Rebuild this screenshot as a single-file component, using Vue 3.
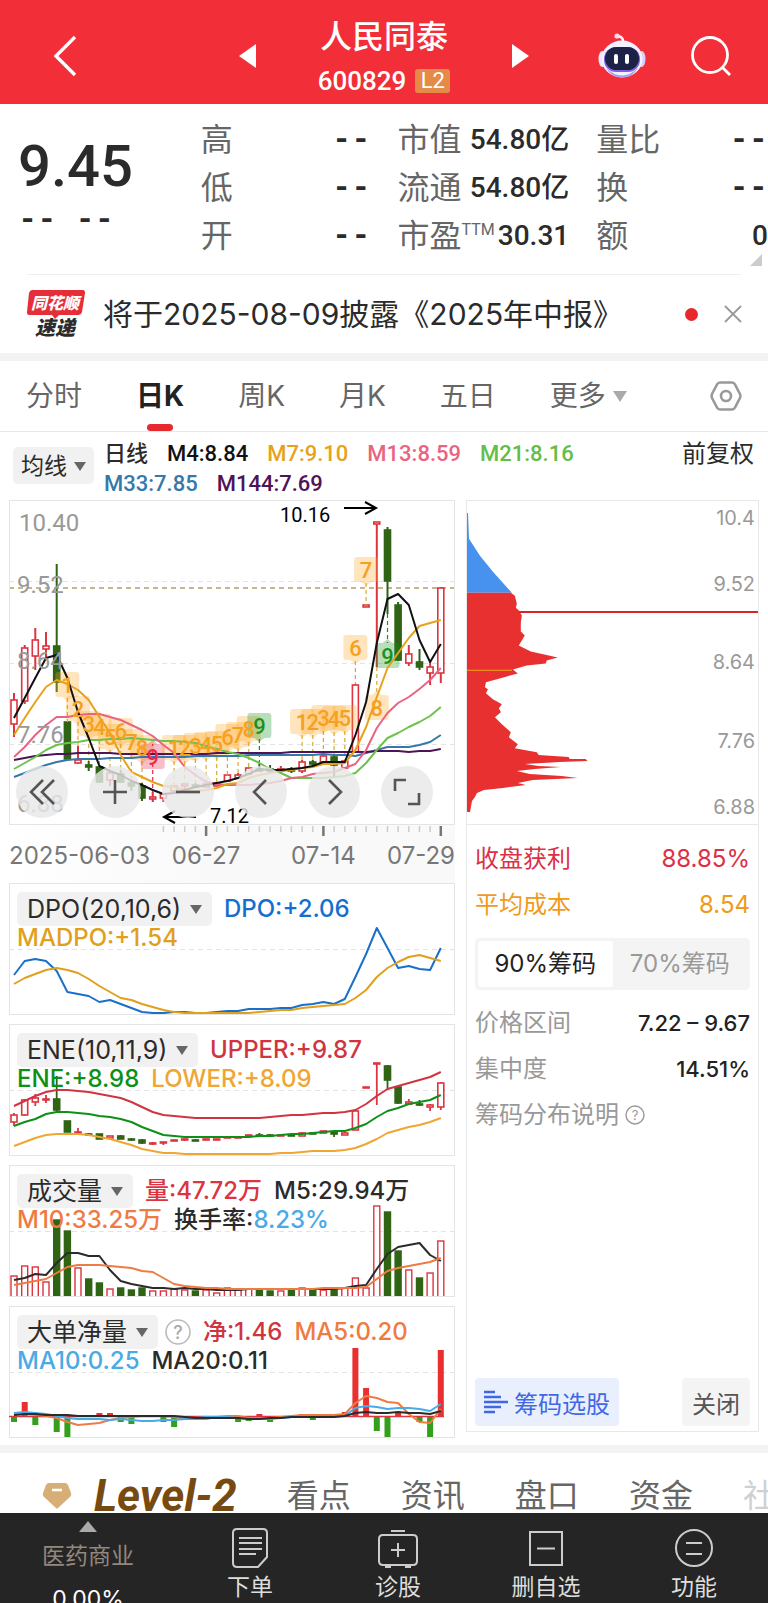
<template>
  <div class="page">
    <header class="header">
      <button class="icon-btn back" aria-label="返回">
        <svg width="26" height="44" viewBox="0 0 26 44">
          <path d="M23 3 L4 22 L23 41" fill="none" stroke="#fff" stroke-width="3.4" />
        </svg>
      </button>
      <div class="stock">
        <button class="icon-btn" aria-label="上一只">
          <svg width="18" height="24" viewBox="0 0 18 24"><path d="M17 0 V24 L0 12Z" fill="#fff" /></svg>
        </button>
        <div class="stock-title">
          <h1>人民同泰</h1>
          <p>600829 <span class="l2">L2</span></p>
        </div>
        <button class="icon-btn" aria-label="下一只">
          <svg width="18" height="24" viewBox="0 0 18 24"><path d="M1 0 V24 L18 12Z" fill="#fff" /></svg>
        </button>
      </div>
      <div class="header-right">
        <button class="icon-btn" aria-label="智能助手">
          <svg width="48" height="46" viewBox="0 0 48 46">
            <path d="M25 10 Q26 4 20 3" fill="none" stroke="#fff" stroke-width="2.4" />
            <circle cx="19" cy="3" r="2.6" fill="#f6dcf0" />
            <ellipse cx="4.500" cy="26" rx="4" ry="8" fill="#e9e4ff" />
            <ellipse cx="43.500" cy="26" rx="4" ry="8" fill="#d9d2fb" />
            <ellipse cx="24" cy="26" rx="20.500" ry="18.500" fill="#f3f0ff" />
            <path d="M8 35 Q24 50 40 35 Q34 45 24 44.500 Q14 45 8 35" fill="#a9a0ee" />
            <rect x="6" y="14" width="36" height="25" rx="12" fill="#7c62dc" />
            <rect x="7" y="14" width="34" height="23" rx="11.500" fill="#1c2145" />
            <rect x="16" y="21" width="4" height="10" rx="2" fill="#fff" />
            <rect x="27" y="21" width="4" height="10" rx="2" fill="#fff" />
          </svg>
        </button>
        <button class="icon-btn" aria-label="搜索">
          <svg width="42" height="42" viewBox="0 0 42 42">
            <circle cx="20" cy="20" r="17.500" fill="none" stroke="#fff" stroke-width="2.800" />
            <path d="M32 32 L40 40" stroke="#fff" stroke-width="2.800" />
          </svg>
        </button>
      </div>
    </header>

    <section class="quote">
      <div class="price">
        <strong>9.45</strong>
        <span class="dash">-- --</span>
      </div>
      <dl v-for="(col, c) in quote" :key="c">
        <div v-for="q in col" :key="q.label">
          <dt>{{ q.label }}<sup v-if="q.sup">{{ q.sup }}</sup></dt>
          <dd :class="{ dash: q.value === '--' }">{{ q.value }}</dd>
        </div>
      </dl>
      <i class="corner"></i>
    </section>

    <section class="news">
      <svg class="news-logo" width="58" height="48" viewBox="0 0 58 48">
        <path d="M5 0 H56 Q58 0 58 3 L55 22 Q54 25 51 25 H32 L28 29 L25 25 H2 Q0 25 0 22 L2 3 Q3 0 5 0Z" fill="#e62e38" />
        <text x="28" y="19" class="logo-text" fill="#fff" font-size="16">同花顺</text>
        <text x="28" y="45" class="logo-text" fill="#2b2b2b" font-size="20">速递</text>
      </svg>
      <a href="#" class="news-text">将于2025-08-09披露《2025年中报》</a>
      <i class="dot"></i>
      <button class="icon-btn" aria-label="关闭公告">
        <svg width="18" height="18" viewBox="0 0 18 18">
          <path d="M1 1 L17 17 M17 1 L1 17" stroke="#999" stroke-width="1.800" />
        </svg>
      </button>
    </section>

    <nav class="tabs">
      <button
        v-for="t in tabs"
        :key="t"
        :class="{ active: t === tab }"
        @click="tab = t"
      >
        {{ t }}<i v-if="t === '更多'" class="caret light"></i>
      </button>
      <button class="setting" aria-label="设置">
        <svg width="32" height="32" viewBox="0 0 32 32" fill="none" stroke="#999" stroke-width="2.600">
          <path d="M10 2.500 H22 Q24 2.500 25 4.500 L30 14 Q31 16 30 18 L25 27.500 Q24 29.500 22 29.500 H10 Q8 29.500 7 27.500 L2 18 Q1 16 2 14 L7 4.500 Q8 2.500 10 2.500Z" />
          <circle cx="16" cy="16" r="5" />
        </svg>
      </button>
    </nav>

    <section class="ma">
      <span class="pick small">
        <select aria-label="主图指标"><option>均线</option></select>
        <i class="caret"></i>
      </span>
      <div class="ma-list">
        <b>日线</b>
        <span v-for="m in maList" :key="m.text" :style="{ color: m.color }">{{ m.text }}</span>
      </div>
      <button class="adjust">前复权</button>
    </section>

    <main class="board">
      <div class="charts">
        <div class="kline">
          <svg viewBox="0 0 446 325" class="chart">
            <g stroke="#e4e4e4" stroke-dasharray="5 4">
              <path d="M0 81.500 H446 M0 163.500 H446 M0 244.500 H446" />
            </g>
            <path d="M0 88 H446" stroke="#b59f68" stroke-width="1.500" stroke-dasharray="5 4" />
            <g>
              <template v-for="(k, i) in candles" :key="i">
                <path :d="wick(k, i)" :stroke="k[4] ? red : green" stroke-width="2" />
                <rect
                  :x="cx(i) - 3"
                  :y="k[1]"
                  width="6"
                  :height="Math.max(k[2] - k[1], 2)"
                  :fill="k[4] ? '#fff' : green"
                  :stroke="k[4] ? red : green"
                  stroke-width="1.600"
                />
              </template>
            </g>
            <g v-for="b in marks" :key="'m' + b.i">
              <path :d="leader(b)" :stroke="b.color || '#d8a936'" stroke-width="1.200" stroke-dasharray="4 3" />
              <path :d="bubble(b)" :fill="b.color || '#ffa726'" opacity="0.3" />
            </g>
            <polyline
              v-for="l in maLines"
              :key="l.color"
              :points="points(l.data)"
              :stroke="l.color"
              class="line"
            />
            <g class="axis">
              <text x="10" y="31">10.40</text>
              <text x="8" y="93">9.52</text>
              <text x="8" y="169">8.64</text>
              <text x="8" y="243">7.76</text>
              <text x="8" y="312">6.88</text>
            </g>
            <text
              v-for="b in marks"
              :key="'t' + b.i"
              :x="cx(b.i)"
              :y="b.y + 8"
              :fill="b.color || '#f5a01f'"
              class="mark"
            >{{ b.n }}</text>
            <g class="note">
              <text x="271" y="22">10.16</text>
              <text x="201" y="323">7.12</text>
              <path d="M335 8 H367 M356 2 L367 8 L356 14" />
              <path d="M187 317 H155 M166 311 L155 317 L166 323" />
            </g>
          </svg>
          <div class="tools">
            <button v-for="t in tools" :key="t.name" :aria-label="t.name">
              <svg width="30" height="30" viewBox="0 0 30 30"><path :d="t.d" /></svg>
            </button>
          </div>
        </div>
        <div class="time">
          <svg viewBox="0 0 446 58" class="chart">
            <path
              v-for="i in 27"
              :key="i"
              :d="tick(i + 13)"
              :stroke="bigTicks.includes(i + 13) ? '#777' : '#ccc'"
              :stroke-width="bigTicks.includes(i + 13) ? 2.5 : 1.5"
            />
            <text x="0" y="39">2025-06-03</text>
            <text :x="cx(18)" y="39" text-anchor="middle">06-27</text>
            <text :x="cx(29)" y="39" text-anchor="middle">07-14</text>
            <text x="446" y="39" text-anchor="end">07-29</text>
          </svg>
        </div>

        <div v-for="p in panels" :key="p.name" class="panel">
          <svg viewBox="0 0 446 130" class="chart">
            <path d="M0 65.500 H446" stroke="#e4e4e4" stroke-dasharray="5 4" />
            <template v-if="p.type === 'ene'">
              <template v-for="(k, i) in eneCandles" :key="i">
                <path :d="wick(k, i)" :stroke="k[4] ? red : green" stroke-width="1.800" />
                <rect
                  :x="cx(i) - 3"
                  :y="k[1]"
                  width="6"
                  :height="Math.max(k[2] - k[1], 1)"
                  :fill="k[4] ? '#fff' : green"
                  :stroke="k[4] ? red : green"
                  stroke-width="1.600"
                />
              </template>
            </template>
            <template v-if="p.type === 'vol'">
              <rect
                v-for="(v, i) in volume"
                :key="i"
                :x="cx(i) - 3"
                :y="Math.abs(v)"
                width="6"
                :height="131 - Math.abs(v)"
                :fill="v > 0 ? '#fff' : green"
                :stroke="v > 0 ? red : green"
                stroke-width="1.400"
              />
            </template>
            <template v-if="p.type === 'net'">
              <path d="M0 109.500 H435" :stroke="red" stroke-width="1.500" />
              <rect
                v-for="(v, i) in net"
                :key="i"
                :x="cx(i) - 3"
                :y="v > 0 ? 109 - v : 110"
                width="6"
                :height="Math.abs(v)"
                :fill="v > 0 ? '#e92f30' : '#33a01c'"
              />
            </template>
            <polyline
              v-for="l in p.lines"
              :key="l.color"
              :points="points(l.data)"
              :stroke="l.color"
              class="line"
            />
          </svg>
          <div class="legend">
            <div v-for="(row, r) in p.rows" :key="r" class="legend-row">
              <span v-if="r === 0" class="pick">
                <select :aria-label="p.name"><option>{{ p.name }}</option></select>
                <i class="caret"></i>
              </span>
              <button v-if="r === 0 && p.help" class="icon-btn" aria-label="指标说明">
                <svg width="26" height="26" viewBox="0 0 26 26">
                  <circle cx="13" cy="13" r="12" fill="none" stroke="#bbb" stroke-width="1.600" />
                  <text x="13" y="20" text-anchor="middle" font-size="18" fill="#aaa">?</text>
                </svg>
              </button>
              <span v-for="s in row" :key="s.text" :style="{ color: s.color }">
                {{ s.text }}<em v-if="s.value" :style="{ color: s.valueColor }">{{ s.value }}</em>
              </span>
            </div>
          </div>
        </div>
      </div>

      <aside class="chips">
        <svg viewBox="0 0 292 324" class="chart">
          <path d="M0 12 L1 12 L2 38 L13 55 L26 71 L45 92 H0Z" fill="#4791ef" />
          <path :d="chipShape" fill="#e93030" />
          <path d="M52 111.500 H292" stroke="#d9242b" stroke-width="2" />
          <path d="M0 170 H45" stroke="#f08a1c" stroke-width="1.300" />
          <g class="chip-axis">
            <text x="289" y="24">10.4</text>
            <text x="289" y="90">9.52</text>
            <text x="289" y="169">8.64</text>
            <text x="289" y="248">7.76</text>
            <text x="289" y="314">6.88</text>
          </g>
        </svg>
        <div class="chip-info">
          <p class="profit"><span>收盘获利</span><span>88.85%</span></p>
          <p class="cost"><span>平均成本</span><span>8.54</span></p>
          <div class="segment">
            <button
              v-for="r in ratios"
              :key="r"
              :class="{ on: r === ratio }"
              @click="ratio = r"
            >{{ r }}筹码</button>
          </div>
          <p><span>价格区间</span><b>7.22 – 9.67</b></p>
          <p><span>集中度</span><b>14.51%</b></p>
          <p class="explain">
            <a href="#">筹码分布说明
              <svg width="20" height="20" viewBox="0 0 20 20">
                <circle cx="10" cy="10" r="9" fill="none" stroke="#999" stroke-width="1.400" />
                <text x="10" y="15" text-anchor="middle" font-size="13" fill="#999">?</text>
              </svg>
            </a>
          </p>
          <div class="chip-actions">
            <button class="select-btn">
              <svg width="24" height="24" viewBox="0 0 24 24" stroke="#4068e4" stroke-width="2.600">
                <path d="M0 2 H11 M0 7 H17 M0 12 H24 M0 17 H17 M0 22 H11" />
              </svg>
              筹码选股
            </button>
            <button class="close-btn">关闭</button>
          </div>
        </div>
      </aside>
    </main>

    <nav class="level">
      <svg width="30" height="26" viewBox="0 0 30 26">
        <path d="M7 0 H23 Q25 0 26 2 L29 10 Q30 12 28 14 L16 25 Q15 26 14 25 L2 14 Q0 12 1 10 L4 2 Q5 0 7 0Z" fill="#d6ae76" />
        <path d="M10 7 H20" stroke="#fff" stroke-width="2.600" />
      </svg>
      <a href="#" class="level-name">Level-2</a>
      <a v-for="l in levelTabs" :key="l" href="#">{{ l }}</a>
      <a href="#" class="faded">社</a>
    </nav>

    <footer class="bottom">
      <button class="sector">
        <svg width="18" height="11" viewBox="0 0 18 11"><path d="M9 0 L18 11 H0Z" fill="#aaa" /></svg>
        <span>医药商业</span>
        <b>0.00%</b>
      </button>
      <button v-for="a in actions" :key="a.name">
        <svg width="42" height="40" viewBox="0 0 42 40"><path :d="a.d" /></svg>
        <span>{{ a.name }}</span>
      </button>
    </footer>
  </div>
</template>

<script setup>
import { ref } from "vue";

const red = "#dc3440";
const green = "#2f6414";

const tab = ref("日K");
const tabs = ["分时", "日K", "周K", "月K", "五日", "更多"];
const ratio = ref("90%");
const ratios = ["90%", "70%"];
const levelTabs = ["看点", "资讯", "盘口", "资金"];

const quote = [
  [
    { label: "高", value: "--" },
    { label: "低", value: "--" },
    { label: "开", value: "--" },
  ],
  [
    { label: "市值", value: "54.80亿" },
    { label: "流通", value: "54.80亿" },
    { label: "市盈", sup: "TTM", value: "30.31" },
  ],
  [
    { label: "量比", value: "--" },
    { label: "换", value: "--" },
    { label: "额", value: "0" },
  ],
];

const maList = [
  { text: "M4:8.84", color: "#111" },
  { text: "M7:9.10", color: "#e6a21a" },
  { text: "M13:8.59", color: "#ea6482" },
  { text: "M21:8.16", color: "#66bd45" },
  { text: "M33:7.85", color: "#3579ab" },
  { text: "M144:7.69", color: "#4f1458" },
];

// [high, body top, body bottom, low, up]
const candles = [
  [193, 200, 224, 237, 1], [145, 148, 201, 204, 1], [128, 140, 156, 170, 1],
  [132, 146, 149, 158, 1], [64, 146, 182, 192, 0], [222, 222, 259, 259, 0],
  [246, 260, 263, 264, 1], [261, 265, 267, 271, 0], [267, 267, 282, 283, 0],
  [272, 273, 280, 286, 1], [270, 274, 282, 283, 0], [280, 283, 286, 291, 0],
  [283, 286, 298, 301, 0], [292, 297, 299, 302, 1], [293, 294, 298, 302, 1],
  [286, 286, 291, 291, 1], [284, 284, 286, 290, 1], [283, 285, 287, 288, 0],
  [284, 284, 287, 287, 1], [283, 283, 286, 286, 1], [275, 275, 281, 281, 1],
  [273, 275, 278, 279, 1], [268, 268, 274, 275, 1], [263, 269, 271, 272, 0],
  [265, 269, 270, 273, 0], [266, 269, 271, 273, 1], [267, 269, 270, 273, 0],
  [260, 262, 271, 273, 1], [260, 262, 264, 266, 0], [254, 256, 262, 263, 1],
  [255, 257, 265, 276, 0], [260, 261, 268, 269, 1], [184, 185, 252, 253, 1],
  [105, 105, 107, 107, 1], [22, 22, 23, 167, 1], [27, 30, 81, 114, 0],
  [102, 105, 160, 161, 0], [145, 154, 163, 166, 1], [149, 162, 167, 170, 0],
  [161, 167, 173, 185, 1], [87, 88, 173, 183, 1],
];

const eneCandles = candles.map((k) => [
  ...k.slice(0, 4).map((y) => Math.round(y * 0.29 + 32)),
  k[4],
]);

const maLines = [
  {
    color: "#3579ab",
    data: [277, 273, 269, 265, 262, 260, 259, 259, 259, 258, 258, 258, 257, 257, 257, 257, 257, 256, 256, 256, 256, 256, 255, 255, 255, 255, 255, 255, 255, 254, 255, 255, 256, 253, 250, 247, 247, 247, 245, 242, 235],
  },
  {
    color: "#4f1458",
    data: [260, 258, 256, 255, 254, 254, 253, 253, 253, 253, 254, 254, 254, 254, 254, 254, 254, 254, 254, 253, 253, 253, 253, 253, 253, 253, 252, 252, 252, 252, 252, 252, 252, 252, 251, 251, 251, 252, 251, 251, 249],
  },
  {
    color: "#6dc24d",
    data: [269, 263, 257, 250, 245, 243, 242, 240, 240, 239, 239, 238, 239, 240, 241, 241, 242, 243, 246, 249, 252, 254, 258, 263, 269, 273, 278, 278, 278, 278, 277, 276, 273, 263, 250, 238, 233, 227, 222, 216, 207],
  },
  {
    color: "#ea6482",
    data: [257, 247, 235, 225, 217, 217, 215, 214, 214, 217, 220, 225, 230, 236, 245, 253, 267, 275, 282, 284, 285, 285, 285, 284, 283, 281, 278, 277, 274, 273, 272, 268, 264, 250, 228, 213, 203, 197, 189, 180, 168],
  },
  {
    color: "#e6a21a",
    data: [235, 218, 202, 187, 180, 184, 190, 200, 217, 233, 255, 272, 277, 282, 286, 287, 290, 291, 290, 288, 284, 283, 278, 275, 273, 271, 270, 268, 267, 264, 264, 263, 250, 227, 197, 168, 153, 138, 126, 123, 120],
  },
  {
    color: "#111",
    data: [218, 198, 178, 158, 155, 178, 212, 238, 266, 271, 275, 281, 285, 290, 294, 293, 290, 287, 285, 283, 281, 278, 274, 269, 270, 270, 269, 268, 266, 262, 262, 262, 235, 202, 143, 99, 94, 105, 140, 162, 144],
  },
];

const seq = (from, ys) => ys.map((y, n) => ({ i: from + n, n: n + 1, y }));
const marks = [
  ...seq(5, [185, 209, 224, 227, 237, 231, 242, 248]),
  { i: 13, n: 9, y: 257, color: "#e8284a", up: true },
  ...seq(15, [248, 248, 246, 245, 244, 237, 235, 229]),
  { i: 23, n: 9, y: 226, color: "#18921e" },
  ...seq(27, [222, 222, 218, 219, 218, 148, 70]),
  { i: 34, n: 8, y: 208, up: true },
  { i: 35, n: 9, y: 156, color: "#18921e", up: true },
];

// negative volume = falling day
const volume = [110, 100, 101, 116, -54, -65, 102, -113, -117, 123, -122, -124, -122, 125, 125, 123, 124, -125, 124, 127, 122, 124, 123, -124, -125, 125, -124, 122, -124, 124, -124, 122, 112, 122, 40, -46, -85, 104, -112, 107, 75];
const net = [-5, 14, -8, 0, -15, -22, 0, 0, 3, 3, -5, -7, 0, 0, -5, -10, 0, 0, 0, 0, 0, -5, -4, 2, -5, 0, 0, 2, -3, 0, 0, 4, 68, 28, -14, -20, 4, 0, -5, -22, 66];

const panels = [
  {
    name: "DPO(20,10,6)",
    type: "dpo",
    rows: [
      [{ text: "DPO:+2.06", color: "#156fd0" }],
      [{ text: "MADPO:+1.54", color: "#e0a01c" }],
    ],
    lines: [
      {
        color: "#1a70c8",
        data: [91, 77, 75, 77, 87, 108, 110, 112, 118, 116, 120, 124, 128, 129, 129, 128, 128, 129, 129, 128, 127, 127, 125, 125, 125, 124, 124, 121, 120, 118, 120, 115, 93, 70, 44, 64, 84, 82, 85, 86, 64],
      },
      {
        color: "#e0a01c",
        data: [100, 94, 90, 86, 84, 86, 89, 95, 102, 108, 114, 116, 120, 123, 126, 128, 129, 129, 129, 129, 129, 129, 129, 128, 127, 126, 126, 124, 123, 122, 121, 120, 114, 106, 93, 84, 78, 73, 71, 74, 77],
      },
    ],
  },
  {
    name: "ENE(10,11,9)",
    type: "ene",
    rows: [
      [{ text: "UPPER:+9.87", color: "#d0353f" }],
      [
        { text: "ENE:+8.98", color: "#0d9018" },
        { text: "LOWER:+8.09", color: "#efa632" },
      ],
    ],
    lines: [
      {
        color: "#d0353f",
        data: [81, 76, 71, 67, 65, 65, 66, 67, 69, 71, 73, 77, 82, 87, 90, 91, 92, 93, 93, 93, 93, 93, 93, 93, 92, 91, 90, 90, 89, 88, 88, 87, 85, 79, 71, 64, 61, 58, 55, 52, 47],
      },
      {
        color: "#0d9018",
        data: [101, 97, 94, 89, 87, 87, 88, 89, 91, 92, 94, 97, 102, 106, 110, 111, 112, 112, 112, 112, 112, 112, 112, 111, 111, 110, 109, 109, 108, 107, 106, 106, 103, 99, 92, 86, 83, 79, 77, 75, 70],
      },
      {
        color: "#efa632",
        data: [121, 117, 113, 110, 109, 109, 109, 110, 112, 114, 117, 120, 124, 126, 128, 128, 129, 129, 129, 129, 129, 129, 129, 129, 129, 128, 128, 127, 126, 126, 126, 125, 123, 119, 114, 108, 105, 102, 100, 97, 93],
      },
    ],
  },
  {
    name: "成交量",
    type: "vol",
    rows: [
      [
        { text: "量:47.72万", color: "#dc3440" },
        { text: "M5:29.94万", color: "#2b2b2b" },
      ],
      [
        { text: "M10:33.25万", color: "#f07b42" },
        { text: "换手率:", color: "#2b2b2b", value: "8.23%", valueColor: "#4aaae6" },
      ],
    ],
    lines: [
      {
        color: "#2b2b2b",
        data: [114, 112, 108, 109, 97, 87, 87, 90, 90, 104, 115, 118, 120, 122, 122, 123, 122, 123, 123, 124, 124, 124, 123, 123, 123, 123, 123, 123, 123, 123, 123, 122, 120, 119, 103, 88, 81, 79, 77, 89, 95],
      },
      {
        color: "#f07b42",
        data: [119, 117, 115, 113, 107, 101, 99, 99, 99, 100, 101, 102, 105, 106, 112, 118, 120, 121, 122, 122, 123, 123, 123, 123, 123, 123, 123, 123, 123, 122, 122, 122, 122, 121, 113, 105, 102, 100, 98, 96, 92],
      },
    ],
  },
  {
    name: "大单净量",
    type: "net",
    help: true,
    rows: [
      [
        { text: "净:1.46", color: "#d0353f" },
        { text: "MA5:0.20", color: "#f07b42" },
      ],
      [
        { text: "MA10:0.25", color: "#4aaae6" },
        { text: "MA20:0.11", color: "#2b2b2b" },
      ],
    ],
    lines: [
      {
        color: "#f07b42",
        data: [108, 107, 108, 109, 111, 115, 118, 117, 116, 113, 111, 110, 109, 109, 109, 110, 112, 112, 112, 110, 109, 109, 111, 111, 111, 110, 109, 108, 108, 108, 108, 107, 96, 89, 91, 95, 96, 107, 115, 116, 102],
      },
      {
        color: "#4aaae6",
        data: [106, 105, 106, 107, 109, 111, 112, 112, 112, 113, 112, 113, 114, 114, 113, 113, 112, 111, 110, 110, 110, 111, 112, 112, 112, 111, 110, 110, 110, 109, 109, 109, 101, 99, 100, 102, 101, 101, 102, 104, 97],
      },
      {
        color: "#2b2b2b",
        data: [108, 107, 107, 108, 108, 108, 109, 109, 109, 109, 109, 109, 109, 109, 109, 109, 110, 111, 111, 111, 111, 111, 112, 112, 111, 111, 110, 110, 110, 110, 110, 109, 106, 105, 106, 106, 105, 106, 106, 107, 104],
      },
    ],
  },
];

const chipShape =
  "M0 92 L44 92 L48 95 L50 103 L49 107 L52 110 L55 115 L54 122 L54 131 L58 135 L52 145 L64 151 L91 157 L80 160 L79 163 L60 165 L46 169 L51 173 L40 176 L19 182 L18 187 L21 189 L19 193 L26 199 L35 204 L32 208 L34 212 L28 217 L35 224 L44 232 L42 237 L51 244 L48 248 L70 252 L72 255 L102 257 L103 259 L119 259 L121 261 L93 262 L58 264 L72 266 L94 267 L68 269 L50 271 L63 274 L95 276 L111 278 L66 280 L51 283 L59 285 L36 288 L17 290 L10 293 L8 297 L5 301 L3 312 L0 312Z";

const tools = [
  { name: "最早", d: "M16 3 L4 15 L16 27 M27 3 L15 15 L27 27" },
  { name: "放大", d: "M15 3 V27 M3 15 H27" },
  { name: "缩小", d: "M3 15 H27" },
  { name: "左移", d: "M20 3 L8 15 L20 27" },
  { name: "右移", d: "M10 3 L22 15 L10 27" },
  { name: "全屏", d: "M3 14 V3 H14 M27 16 V27 H16" },
];

const actions = [
  {
    name: "下单",
    d: "M8 1 H34 Q38 1 38 5 V29 L29 39 H8 Q4 39 4 35 V5 Q4 1 8 1Z M10 10 H33 M10 15 H33 M10 21 H33 M10 26 H27",
  },
  {
    name: "诊股",
    d: "M6 7 H36 Q40 7 40 11 V33 Q40 37 36 37 H6 Q2 37 2 33 V11 Q2 7 6 7Z M14 3 H28 M21 15 V29 M14 22 H28 M8 39 H14 M28 39 H34",
  },
  { name: "删自选", d: "M5 4 H37 V37 H5Z M12 20.500 H30" },
  {
    name: "功能",
    d: "M39 20 A18 18 0 1 1 3 20 A18 18 0 1 1 39 20Z M13 15 H29 M13 26 H29",
  },
];

const bigTicks = [18, 29, 40];

const cx = (i) => Math.round((5 + i * 10.67) * 10) / 10;
const points = (data) => data.map((y, i) => `${cx(i)},${y}`).join(" ");
const wick = (k, i) => `M${cx(i)} ${k[0]} V${k[1]} M${cx(i)} ${k[2]} V${k[3]}`;
const tick = (i) => `M${cx(i)} 1 V${bigTicks.includes(i) ? 11 : 7}`;

const leader = (b) => {
  const k = candles[b.i];
  return b.up ? `M${cx(b.i)} ${k[3]} V${b.y - 13}` : `M${cx(b.i)} ${b.y + 13} V${k[0]}`;
};

const bubble = (b) => {
  const x = cx(b.i);
  const t = b.y - 13;
  const box = `M${x - 9} ${t} h18 q3 0 3 3 v19 q0 3 -3 3 h-18 q-3 0 -3 -3 v-19 q0 -3 3 -3Z`;
  return b.up
    ? `${box} M${x - 5} ${t} L${x} ${t - 4} L${x + 5} ${t}Z`
    : `${box} M${x - 5} ${t + 25} L${x} ${t + 29} L${x + 5} ${t + 25}Z`;
};
</script>

<style>
body {
  margin: 0;
  background: #fff;
}
</style>

<style scoped>
.page {
  font-family: Inter, "Noto Sans CJK SC", sans-serif;
  font-size: 24px;
  color: #2b2b2b;
  background: #fff;
  overflow: hidden;
}
* {
  box-sizing: border-box;
}
button,
select {
  border: 0;
  padding: 0;
  margin: 0;
  background: none;
  font: inherit;
  color: inherit;
}
a {
  color: inherit;
  text-decoration: none;
}
h1,
p,
dl,
dd {
  margin: 0;
}
svg {
  flex: none;
  overflow: visible;
}
.icon-btn,
svg {
  display: block;
}

.header {
  display: grid;
  grid-template-columns: 1fr 290px 1fr;
  align-items: center;
  height: 104px;
  padding: 8px 36px 0;
  background: #f22f38;
  color: #fff;
}
.back {
  justify-self: start;
  margin-left: 16px;
}
.stock {
  display: flex;
  align-items: center;
  justify-content: space-between;
}
.stock-title {
  padding-top: 5px;
  text-align: center;
}
.stock-title h1 {
  font-size: 32px;
  line-height: 44px;
  font-weight: 500;
}
.stock-title p {
  display: flex;
  align-items: center;
  justify-content: center;
  gap: 9px;
  font-family: Roboto, sans-serif;
  font-size: 26px;
  line-height: 44px;
  font-weight: 500;
}
.l2 {
  width: 35px;
  border-radius: 3px;
  background: #e48b48;
  font-size: 22px;
  line-height: 24px;
  font-weight: 400;
}
.header-right {
  display: flex;
  align-items: center;
  justify-content: flex-end;
  gap: 44px;
}

.quote {
  position: relative;
  display: grid;
  grid-template-columns: 155fr 169fr 171fr 171fr;
  column-gap: 27px;
  padding: 12px 0 15px 18px;
}
.quote::after {
  content: "";
  position: absolute;
  left: 27px;
  right: 27px;
  bottom: 0;
  height: 1px;
  background: #eee;
}
.price {
  padding-top: 20px;
  font-family: Roboto, sans-serif;
}
.price strong {
  display: block;
  font-size: 58px;
  line-height: 60px;
  font-weight: 500;
}
.price .dash {
  display: block;
  line-height: 48px;
}
.dash {
  font-family: "Liberation Mono", monospace;
  font-size: 32px;
  font-weight: 700;
}
.quote dl > div {
  display: flex;
  justify-content: space-between;
  align-items: center;
  height: 48px;
  white-space: nowrap;
}
.quote dt {
  display: flex;
  font-size: 32px;
  line-height: 48px;
  color: #666;
}
.quote sup {
  margin-top: 6px;
  font-family: Roboto, sans-serif;
  font-size: 16px;
  line-height: 24px;
}
.quote dd {
  font-family: Roboto, "Noto Sans CJK SC", sans-serif;
  font-size: 28px;
  font-weight: 500;
  line-height: 48px;
}
.quote dd.dash {
  font-family: "Liberation Mono", monospace;
  font-size: 32px;
  font-weight: 700;
}
.corner {
  position: absolute;
  right: 6px;
  bottom: 9px;
  border-left: 12px solid transparent;
  border-bottom: 12px solid #ccc;
}

.news {
  display: flex;
  align-items: center;
  height: 78px;
  padding: 0 26px 0 27px;
}
.logo-text {
  text-anchor: middle;
  font-style: italic;
  font-weight: 900;
}
.news-text {
  flex: 1;
  margin-left: 18px;
  font-size: 30px;
  line-height: 40px;
  white-space: nowrap;
}
.dot {
  width: 13px;
  height: 13px;
  margin-right: 26px;
  border-radius: 50%;
  background: #e8282e;
}

.tabs {
  display: flex;
  align-items: center;
  gap: 54px;
  height: 79px;
  padding: 0 26px;
  border-top: 8px solid #f3f3f3;
  border-bottom: 1px solid #e8e8e8;
}
.tabs button {
  position: relative;
  display: flex;
  align-items: center;
  font-size: 28px;
  line-height: 70px;
  color: #666;
}
.tabs .active {
  color: #222;
  font-weight: 700;
}
.tabs .active::after {
  content: "";
  position: absolute;
  left: 50%;
  bottom: 0;
  width: 26px;
  height: 7px;
  margin-left: -13px;
  border-radius: 4px;
  background: #e6292f;
}
.tabs .setting {
  margin-left: auto;
}
.caret {
  border: 6px solid transparent;
  border-top: 9px solid #666;
  border-bottom: 0;
}
.caret.light {
  margin-left: 7px;
  border-width: 11px 7px 0;
  border-top-color: #aaa;
}

.ma {
  display: flex;
  align-items: flex-start;
  height: 68px;
  padding: 7px 14px 0 13px;
}
.pick {
  position: relative;
  display: block;
  flex: none;
  font-size: 25px;
}
.pick select {
  display: block;
  appearance: none;
  height: 34px;
  padding: 0 30px 0 10px;
  border-radius: 5px;
  background: #f1f1f1;
  color: #2b2b2b;
}
.pick .caret {
  position: absolute;
  right: 10px;
  top: 13px;
  pointer-events: none;
}
.pick.small {
  margin: 8px 10px 0 0;
  font-size: 23px;
}
.pick.small select {
  height: 37px;
  padding: 0 27px 0 8px;
}
.pick.small .caret {
  right: 8px;
  top: 15px;
}
.ma-list {
  flex: 1;
  display: flex;
  flex-wrap: wrap;
  column-gap: 19px;
  max-width: 500px;
  font-family: Roboto, "Noto Sans CJK SC", sans-serif;
  font-size: 22px;
  line-height: 30px;
  font-weight: 500;
}
.ma-list b {
  font-weight: 500;
}
.adjust {
  margin-left: auto;
  line-height: 30px;
}

.board {
  display: grid;
  grid-template-columns: 446fr 293fr;
  column-gap: 11px;
  padding: 0 9px 7px;
}
.charts {
  display: flex;
  flex-direction: column;
  min-width: 0;
}
.chart {
  width: 100%;
  height: auto;
}
.kline {
  position: relative;
  outline: 1px solid #e4e4e4;
  outline-offset: -1px;
}
.line {
  fill: none;
  stroke-width: 2;
  stroke-linejoin: round;
}
.axis text {
  font-family: Roboto, sans-serif;
  font-size: 24px;
  fill: #999;
}
.mark {
  font-family: Roboto, sans-serif;
  font-size: 22px;
  font-weight: 500;
  text-anchor: middle;
}
.note text {
  font-family: Roboto, sans-serif;
  font-size: 20px;
  fill: #000;
}
.note path {
  fill: none;
  stroke: #000;
  stroke-width: 2;
}
.tools {
  position: absolute;
  left: 7px;
  bottom: 7px;
  display: flex;
  gap: 21px;
}
.tools button {
  display: flex;
  align-items: center;
  justify-content: center;
  width: 52px;
  height: 52px;
  border-radius: 50%;
  background: rgba(232, 232, 232, 0.82);
}
.tools path {
  fill: none;
  stroke: #555;
  stroke-width: 2.6;
}
.time {
  background: linear-gradient(90deg, #fff, #f9f9f9 45%);
}
.time text {
  fill: #777;
}
.panel {
  display: grid;
  border: 1px solid #e4e4e4;
  border-width: 1px 0;
  box-shadow: inset 1px 0 #e4e4e4, inset -1px 0 #e4e4e4;
}
.panel + .panel {
  margin-top: 9px;
}
.panel > * {
  grid-area: 1 / 1;
}
.panel .chart {
  overflow: hidden;
}
.legend {
  position: relative;
  padding: 8px 8px 0;
  font-weight: 500;
}
.legend-row {
  display: flex;
  align-items: center;
  gap: 12px;
  line-height: 24px;
  white-space: nowrap;
}
.legend-row .pick {
  font-weight: 400;
}
.legend-row .icon-btn {
  margin-left: -5px;
}
.legend em {
  font-style: normal;
}

.chips {
  display: flex;
  flex-direction: column;
  margin-bottom: 6px;
  border: 1px solid #e8e8e8;
}
.chips > .chart {
  border-bottom: 1px solid #e8e8e8;
}
.chip-axis text {
  font-size: 20px;
  fill: #999;
  text-anchor: end;
}
.chip-info {
  flex: 1;
  display: flex;
  flex-direction: column;
  padding: 11px 8px 5px;
}
.chip-info p {
  display: flex;
  justify-content: space-between;
  line-height: 46px;
  color: #999;
}
.chip-info b {
  color: #222;
  font-size: 22px;
  font-weight: 500;
}
.chip-info .profit {
  color: #dc3047;
}
.chip-info .cost {
  color: #f09a1a;
}
.segment {
  display: grid;
  grid-template-columns: 1fr 1fr;
  margin: 10px 0;
  padding: 3px;
  border-radius: 5px;
  background: #f4f4f4;
}
.segment button {
  line-height: 46px;
  color: #999;
}
.segment .on {
  border-radius: 3px;
  background: #fff;
  color: #222;
}
.explain a {
  display: flex;
  align-items: center;
  gap: 6px;
}
.chip-actions {
  display: flex;
  justify-content: space-between;
  margin-top: auto;
}
.chip-actions button {
  display: flex;
  align-items: center;
  gap: 6px;
  height: 48px;
  padding: 0 9px;
  border-radius: 4px;
}
.select-btn {
  background: #e9effd;
  color: #4068e4;
}
.chip-actions .close-btn {
  padding: 0 10px;
  background: #f4f4f4;
  color: #555;
}

.level {
  display: flex;
  align-items: center;
  height: 68px;
  padding: 26px 0 0 42px;
  border-top: 8px solid #f3f3f3;
  font-size: 32px;
  line-height: 34px;
  color: #666;
  white-space: nowrap;
  overflow: hidden;
}
.level a + a {
  margin-left: 50px;
}
.level .level-name {
  margin-left: 22px;
  color: #774a12;
  font-family: Roboto, sans-serif;
  font-size: 44px;
  font-style: italic;
  font-weight: 700;
}
.level .faded {
  opacity: 0.3;
}

.bottom {
  display: grid;
  grid-template-columns: 176fr 148fr 148fr 148fr 148fr;
  height: 90px;
  overflow: hidden;
  background: #252525;
  color: #ddd;
  font-size: 23px;
}
.bottom button {
  display: flex;
  flex-direction: column;
  align-items: center;
  padding-top: 15px;
  line-height: 38px;
}
.bottom button path {
  fill: none;
  stroke: #ccc;
  stroke-width: 2;
}
.bottom .sector {
  padding-top: 8px;
  line-height: 48px;
  color: #94877c;
}
.bottom .sector path {
  fill: #aaa;
  stroke: none;
}
.bottom .sector b {
  color: #fff;
  font-weight: 400;
  line-height: 38px;
}
</style>
